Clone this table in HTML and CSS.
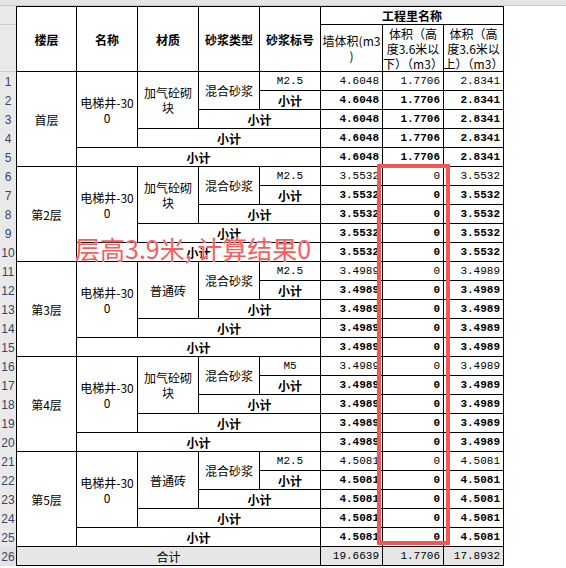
FILE: index.html
```html
<!DOCTYPE html>
<html lang="zh-CN">
<head>
<meta charset="utf-8">
<title>工程量表</title>
<link rel="stylesheet" href="styles.css">
</head>
<body>
<div class="page">
  <div class="topbar"></div>
  <div class="sheet">
    <div class="gutter">
      <div class="gh1"></div>
      <div class="gh2"></div>
      <div class="rn">1</div><div class="rn">2</div><div class="rn">3</div><div class="rn">4</div><div class="rn">5</div>
      <div class="rn">6</div><div class="rn">7</div><div class="rn">8</div><div class="rn">9</div><div class="rn">10</div>
      <div class="rn">11</div><div class="rn">12</div><div class="rn">13</div><div class="rn">14</div><div class="rn">15</div>
      <div class="rn">16</div><div class="rn">17</div><div class="rn">18</div><div class="rn">19</div><div class="rn">20</div>
      <div class="rn">21</div><div class="rn">22</div><div class="rn">23</div><div class="rn">24</div><div class="rn">25</div>
      <div class="rn tot">26</div>
    </div>
    <div class="grid">
      <!-- header -->
      <div class="b r2">楼层</div>
      <div class="b r2">名称</div>
      <div class="b r2">材质</div>
      <div class="b r2">砂浆类型</div>
      <div class="b r2">砂浆标号</div>
      <div class="b s3">工程里名称</div>
      <div class="hd">墙体积(m3<br>)</div>
      <div class="hd">体积（高<br>度3.6米以<br>下）（m3）</div>
      <div class="hd">体积（高<br>度3.6米以<br>上）（m3）</div>

      <!-- 首层 -->
      <div class="r5">首层</div>
      <div class="r4">电梯井-30<br>0</div>
      <div class="r3">加气砼砌<br>块</div>
      <div class="r2">混合砂浆</div>
      <div class="m">M2.5</div>
      <div class="n">4.6048</div><div class="n">1.7706</div><div class="n">2.8341</div>
      <div class="b">小计</div>
      <div class="n b">4.6048</div><div class="n b">1.7706</div><div class="n b">2.8341</div>
      <div class="b s2">小计</div>
      <div class="n b">4.6048</div><div class="n b">1.7706</div><div class="n b">2.8341</div>
      <div class="b s3">小计</div>
      <div class="n b">4.6048</div><div class="n b">1.7706</div><div class="n b">2.8341</div>
      <div class="b s4">小计</div>
      <div class="n b">4.6048</div><div class="n b">1.7706</div><div class="n b">2.8341</div>

      <!-- 第2层 -->
      <div class="r5">第2层</div>
      <div class="r4">电梯井-30<br>0</div>
      <div class="r3">加气砼砌<br>块</div>
      <div class="r2">混合砂浆</div>
      <div class="m">M2.5</div>
      <div class="n">3.5532</div><div class="n">0</div><div class="n">3.5532</div>
      <div class="b">小计</div>
      <div class="n b">3.5532</div><div class="n b">0</div><div class="n b">3.5532</div>
      <div class="b s2">小计</div>
      <div class="n b">3.5532</div><div class="n b">0</div><div class="n b">3.5532</div>
      <div class="b s3">小计</div>
      <div class="n b">3.5532</div><div class="n b">0</div><div class="n b">3.5532</div>
      <div class="b s4">小计</div>
      <div class="n b">3.5532</div><div class="n b">0</div><div class="n b">3.5532</div>

      <!-- 第3层 -->
      <div class="r5">第3层</div>
      <div class="r4">电梯井-30<br>0</div>
      <div class="r3">普通砖</div>
      <div class="r2">混合砂浆</div>
      <div class="m">M2.5</div>
      <div class="n">3.4989</div><div class="n">0</div><div class="n">3.4989</div>
      <div class="b">小计</div>
      <div class="n b">3.4989</div><div class="n b">0</div><div class="n b">3.4989</div>
      <div class="b s2">小计</div>
      <div class="n b">3.4989</div><div class="n b">0</div><div class="n b">3.4989</div>
      <div class="b s3">小计</div>
      <div class="n b">3.4989</div><div class="n b">0</div><div class="n b">3.4989</div>
      <div class="b s4">小计</div>
      <div class="n b">3.4989</div><div class="n b">0</div><div class="n b">3.4989</div>

      <!-- 第4层 -->
      <div class="r5">第4层</div>
      <div class="r4">电梯井-30<br>0</div>
      <div class="r3">加气砼砌<br>块</div>
      <div class="r2">混合砂浆</div>
      <div class="m">M5</div>
      <div class="n">3.4989</div><div class="n">0</div><div class="n">3.4989</div>
      <div class="b">小计</div>
      <div class="n b">3.4989</div><div class="n b">0</div><div class="n b">3.4989</div>
      <div class="b s2">小计</div>
      <div class="n b">3.4989</div><div class="n b">0</div><div class="n b">3.4989</div>
      <div class="b s3">小计</div>
      <div class="n b">3.4989</div><div class="n b">0</div><div class="n b">3.4989</div>
      <div class="b s4">小计</div>
      <div class="n b">3.4989</div><div class="n b">0</div><div class="n b">3.4989</div>

      <!-- 第5层 -->
      <div class="r5">第5层</div>
      <div class="r4">电梯井-30<br>0</div>
      <div class="r3">普通砖</div>
      <div class="r2">混合砂浆</div>
      <div class="m">M2.5</div>
      <div class="n">4.5081</div><div class="n">0</div><div class="n">4.5081</div>
      <div class="b">小计</div>
      <div class="n b">4.5081</div><div class="n b">0</div><div class="n b">4.5081</div>
      <div class="b s2">小计</div>
      <div class="n b">4.5081</div><div class="n b">0</div><div class="n b">4.5081</div>
      <div class="b s3">小计</div>
      <div class="n b">4.5081</div><div class="n b">0</div><div class="n b">4.5081</div>
      <div class="b s4">小计</div>
      <div class="n b">4.5081</div><div class="n b">0</div><div class="n b">4.5081</div>

      <!-- 合计 -->
      <div class="s5 tot">合计</div>
      <div class="n tot">19.6639</div><div class="n tot">1.7706</div><div class="n tot">17.8932</div>
    </div>
  </div>

  <div class="mark-box"></div>
  <div class="mark-text">层高3.9米, 计算结果0</div>
</div>
</body>
</html>
```

FILE: styles.css
```css
html, body {
  margin: 0;
  padding: 0;
  background: #fff;
}

.page {
  position: relative;
  width: 566px;
  height: 568px;
  overflow: hidden;
  background: #fff;
}

.topbar {
  height: 5px;
  background: #e4e4e4;
  border-bottom: 1px solid #c9c9c9;
}

.sheet {
  display: flex;
  align-items: flex-start;
}

.gutter {
  width: 16px;
  display: flex;
  flex-direction: column;
  background: #e9e9e9;
}

.gh1 {
  height: 18px;
  border-bottom: 1px solid #cdcdcd;
}

.gh2 {
  height: 46px;
  border-bottom: 1px solid #cdcdcd;
}

.rn {
  height: 19px;
  display: flex;
  align-items: center;
  justify-content: center;
  font: 12px/1 "Liberation Sans", Arial, sans-serif;
  color: #36466a;
}

.rn.tot {
  background: #e2e2e2;
}

.grid {
  display: grid;
  grid-template-columns: 59px 60px 60px 60px 60px 61px 60px 59px;
  grid-template-rows: 17px 46px repeat(26, 18px);
  gap: 1px;
  padding: 1px;
  background: #000;
}

.grid > div {
  background: #fff;
  display: flex;
  align-items: center;
  justify-content: center;
  text-align: center;
  font-family: "Noto Sans CJK SC", "Noto Sans", sans-serif;
  font-size: 12px;
  line-height: 15px;
  color: #000;
  overflow: hidden;
  white-space: nowrap;
}

.grid > .hd {
  line-height: 15px;
  font-size: 12px;
}

.grid > .b {
  font-weight: 700;
}

.grid > .m {
  font-family: "Liberation Mono", "DejaVu Sans Mono", monospace;
  font-size: 11px;
}

.grid > .n {
  justify-content: flex-end;
  padding-right: 3px;
  font-family: "Liberation Mono", "DejaVu Sans Mono", monospace;
  font-size: 11px;
}

.grid > .tot {
  background: #e6e6e6;
  font-weight: 400;
}

.r2 { grid-row: span 2; }
.r3 { grid-row: span 3; }
.r4 { grid-row: span 4; }
.r5 { grid-row: span 5; }
.s2 { grid-column: span 2; }
.s3 { grid-column: span 3; }
.s4 { grid-column: span 4; }
.s5 { grid-column: span 5; }

.mark-box {
  position: absolute;
  left: 377px;
  top: 164px;
  width: 73px;
  height: 381px;
  box-sizing: border-box;
  border: 4px solid #f45656;
  border-radius: 1px;
}

.mark-text {
  position: absolute;
  left: 75px;
  top: 236px;
  font-family: "Noto Sans CJK SC", sans-serif;
  font-size: 25px;
  line-height: 25px;
  color: #ff5a5a;
  white-space: nowrap;
  text-shadow: 0 0 1px #fff, 0 0 1px #fff;
}
```
